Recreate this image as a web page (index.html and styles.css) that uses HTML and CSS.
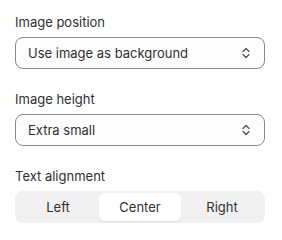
FILE: index.html
```html
<!DOCTYPE html>
<html>
<head>
<meta charset="utf-8">
<link rel="stylesheet" href="styles.css">
</head>
<body>
<div class="panel">
  <div class="field">
    <div class="label">Image position</div>
    <div class="select">
      <span>Use image as background</span>
      <svg class="chev" width="8" height="12" viewBox="0 0 8 12"><path d="M1 4.5 L4 1.5 L7 4.5 M1 7.5 L4 10.5 L7 7.5" fill="none" stroke="#4a4a4a" stroke-width="1.2" stroke-linecap="round" stroke-linejoin="round"/></svg>
    </div>
  </div>
  <div class="field">
    <div class="label">Image height</div>
    <div class="select">
      <span>Extra small</span>
      <svg class="chev" width="8" height="12" viewBox="0 0 8 12"><path d="M1 4.5 L4 1.5 L7 4.5 M1 7.5 L4 10.5 L7 7.5" fill="none" stroke="#4a4a4a" stroke-width="1.2" stroke-linecap="round" stroke-linejoin="round"/></svg>
    </div>
  </div>
  <div class="field">
    <div class="label">Text alignment</div>
    <div class="segment">
      <div class="seg">Left</div>
      <div class="seg active">Center</div>
      <div class="seg">Right</div>
    </div>
  </div>
</div>
</body>
</html>
```
FILE: styles.css
```css
html, body { margin: 0; padding: 0; background: #ffffff; }
body { font-family: Inter, "Noto Sans", sans-serif; color: #303030; font-size: 13px; }
.panel { padding: 13px 17px 0 15px; display: flex; flex-direction: column; gap: 21px; }
.field { display: flex; flex-direction: column; gap: 6px; }
.label { font-size: 13px; line-height: 18px; }
.select { height: 30px; border: 1px solid #8a8a8a; border-radius: 8px; background: #fdfdfd; display: flex; align-items: center; justify-content: space-between; padding: 0 14px 0 12px; }
.chev { display: block; }
.segment { height: 32px; background: #f1f1f1; border-radius: 8px; padding: 2px; box-sizing: border-box; display: grid; grid-template-columns: 1fr 1fr 1fr; }
.seg { display: flex; align-items: center; justify-content: center; border-radius: 6px; }
.seg.active { background: #ffffff; box-shadow: 0 1px 1px rgba(0,0,0,0.08); }
```
